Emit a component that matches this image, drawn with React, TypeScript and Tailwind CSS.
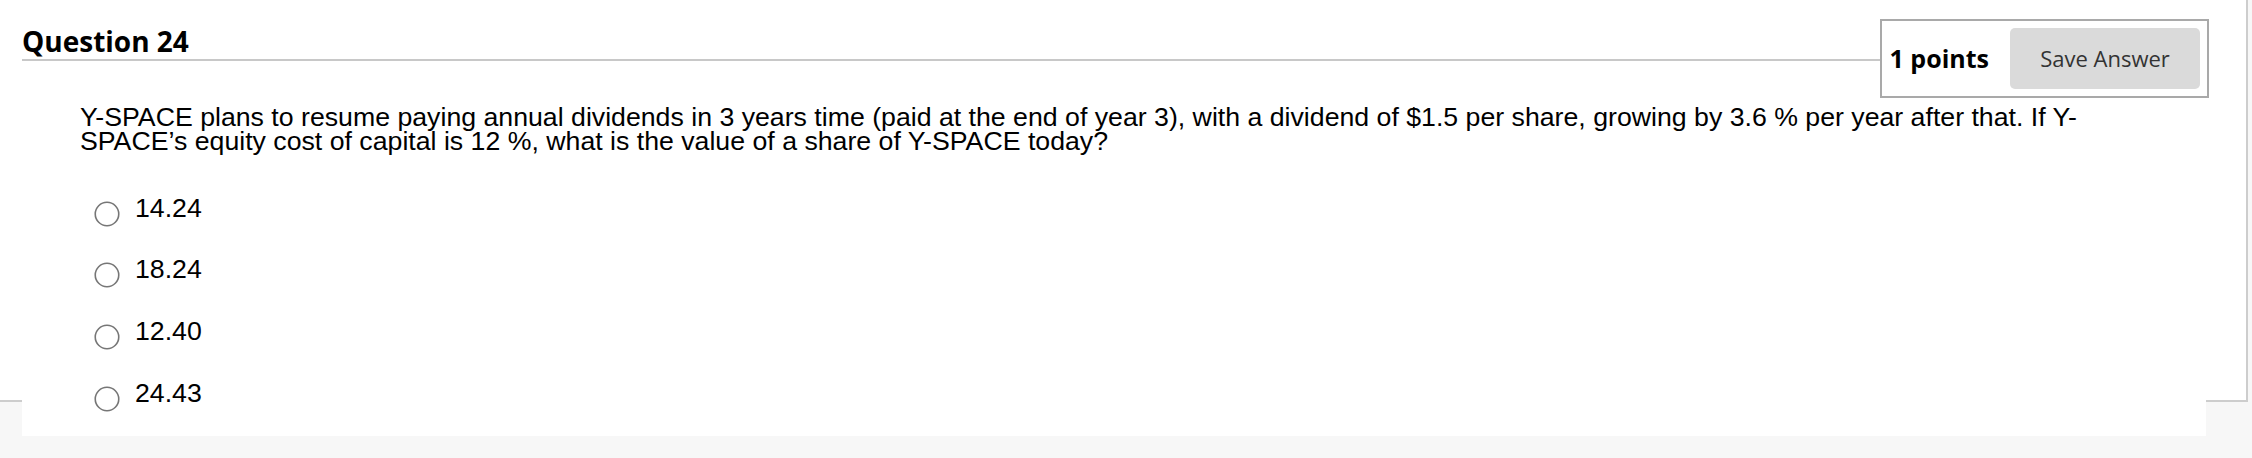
import { useState } from "react"

const options = ["14.24", "18.24", "12.40", "24.43"]

function Radio({ checked }: { checked: boolean }) {
    return (
        <svg width="26" height="26" viewBox="0 0 26 26" className="shrink-0">
            <circle cx="13" cy="13" r="11.75" fill="white" stroke="#767676" strokeWidth="1.6" />
            {checked && <circle cx="13" cy="13" r="6" fill="#1a73e8" />}
        </svg>
    )
}

export default function App() {
    const [selected, setSelected] = useState<string | null>(null)

    return (
        <div className="w-[2252px] h-[458px] overflow-hidden bg-[#f7f7f7]">
            <div className="w-[2248px] h-[402px] bg-white border-r-2 border-b-2 border-[#cdcdcd]">
                <div className="ml-[22px] w-[2184px] h-[436px] bg-white">
                    {/* Header */}
                    <div className="flex items-start -mr-[3px]">
                        <h2
                            className="flex-1 pt-[27px] pb-[4px] border-b-2 border-[#c8c8c8] text-[28px] leading-[28px] font-bold text-black"
                            style={{ fontFamily: '"Open Sans", sans-serif' }}
                        >
                            Question 24
                        </h2>
                        <div
                            className="mt-[19px] flex items-center gap-[21px] border-2 border-[#a9a9a9] p-[7px]"
                            style={{ fontFamily: '"Open Sans", sans-serif' }}
                        >
                            <span className="pl-[1px] text-[25px] leading-none font-bold text-black">1 points</span>
                            <button className="w-[190px] h-[61px] flex items-center justify-center rounded-[5px] bg-[#dadada] text-[22px] text-[#333]">
                                Save Answer
                            </button>
                        </div>
                    </div>

                    {/* Question */}
                    <div className="pl-[58px] pr-[80px] pt-[7px]" style={{ fontFamily: '"Liberation Sans", Arial, sans-serif' }}>
                        <p className="text-[26.7px] leading-[24.3px] text-black">
                            Y-SPACE plans to resume paying annual dividends in 3 years time (paid at the end of year 3), with a dividend of
                            $1.5 per share, growing by 3.6 % per year after that. If Y-SPACE’s equity cost of capital is 12 %, what is the
                            value of a share of Y-SPACE today?
                        </p>

                        <div className="mt-[43px] flex flex-col">
                            {options.map((o) => (
                                <label
                                    key={o}
                                    className="h-[61.67px] flex items-start gap-[15px] pl-[14px] cursor-pointer"
                                    onClick={() => setSelected(o)}
                                >
                                    <span className="mt-[4px]">
                                        <Radio checked={selected === o} />
                                    </span>
                                    <span className="-mt-[1px] text-[26.7px] leading-[24.3px] text-black">{o}</span>
                                </label>
                            ))}
                        </div>
                    </div>
                </div>
            </div>
        </div>
    )
}
